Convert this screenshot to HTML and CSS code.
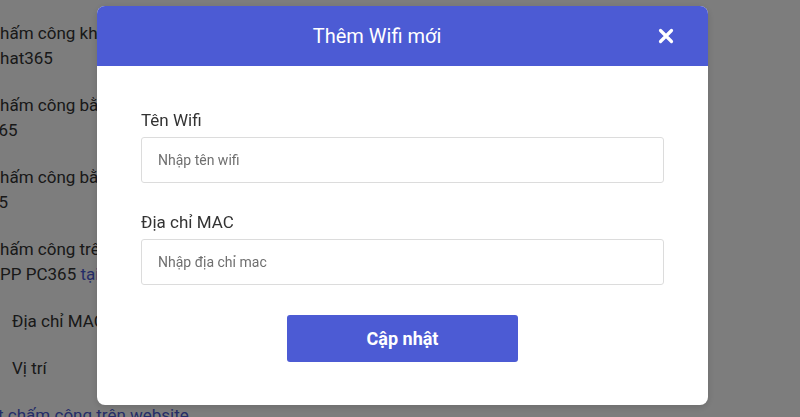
FILE: index.html
```html
<!DOCTYPE html>
<html lang="vi">
<head>
<meta charset="utf-8">
<title>Thêm Wifi mới</title>
<link rel="stylesheet" href="styles.css">
</head>
<body>
<div class="page">
  <p class="item">Chấm công khuôn mặt trên app<br>Chat365</p>
  <p class="item">Chấm công bằng mã QR trên app<br>365</p>
  <p class="item">Chấm công bằng khuôn mặt trên<br>65</p>
  <p class="item">Chấm công trên website hoặc<br>APP PC365 <a class="link" href="#">tại đây</a></p>
  <p class="row">Địa chỉ MAC</p>
  <p class="row">Vị trí</p>
  <p class="item shifted"><a class="link under" href="#">Cài đặt chấm công trên website</a></p>
</div>

<div class="overlay">
  <div class="modal">
    <div class="modal-header">
      <h2 class="modal-title">Thêm Wifi mới</h2>
      <button class="close" type="button" aria-label="Đóng">
        <svg viewBox="0 0 16 16" width="16" height="16"><path d="M2.5 2.5 L13.5 13.5 M13.5 2.5 L2.5 13.5" stroke="#fff" stroke-width="3.2" stroke-linecap="round" fill="none"/></svg>
      </button>
    </div>
    <form class="modal-body">
      <label class="label" for="wifi">Tên Wifi</label>
      <input class="input" id="wifi" type="text" placeholder="Nhập tên wifi">
      <label class="label second" for="mac">Địa chỉ MAC</label>
      <input class="input" id="mac" type="text" placeholder="Nhập địa chỉ mac">
      <button class="submit" type="button">Cập nhật</button>
    </form>
  </div>
</div>
</body>
</html>
```

FILE: styles.css
```css
* { box-sizing: border-box; }

html, body {
  margin: 0;
  padding: 0;
  background: #fff;
  font-family: Roboto, "Noto Sans", Arial, sans-serif;
  overflow: hidden;
  height: 417px;
}

.page {
  display: flex;
  flex-direction: column;
  gap: 22px;
  padding-top: 21px;
  margin-left: -11px;
  color: #333;
  font-size: 17px;
  line-height: 25px;
}

.page p { margin: 0; white-space: nowrap; }

.page .row { padding-left: 23px; }

.page .shifted { margin-left: -39px; }

.link { color: #4c5bd4; text-decoration: none; }
.link.under { text-decoration: underline; }

.overlay {
  position: fixed;
  inset: 0;
  background: rgba(0, 0, 0, 0.51);
  padding: 6px 0 0 97px;
}

.modal {
  width: 611px;
  height: 399px;
  background: #fff;
  border-radius: 8px;
  overflow: hidden;
  box-shadow: 0 2px 8px rgba(0, 0, 0, 0.15);
}

.modal-header {
  height: 60px;
  background: #4c5bd4;
  display: flex;
  align-items: center;
}

.modal-title {
  flex: 1;
  margin: 0;
  text-align: center;
  color: #fff;
  font-size: 20px;
  font-weight: 400;
  line-height: 24px;
}

.close {
  width: 16px;
  height: 16px;
  padding: 0;
  margin: 0 34px 0 1px;
  border: 0;
  background: none;
  display: flex;
}

.modal-body {
  display: flex;
  flex-direction: column;
  padding: 44px 44px 0;
}

.label {
  font-size: 17px;
  line-height: 20px;
  color: #333;
  margin-bottom: 7px;
}

.label.second { margin-top: 29px; }

.input {
  height: 46px;
  border: 1px solid #dcdcdc;
  border-radius: 3px;
  padding: 0 16px;
  font-family: inherit;
  font-size: 14px;
  color: #333;
}

.input::placeholder { color: #6f6f6f; }

.submit {
  align-self: center;
  width: 231px;
  height: 47px;
  margin-top: 30px;
  border: 0;
  border-radius: 3px;
  background: #4c5bd4;
  color: #fff;
  font-family: inherit;
  font-size: 18px;
  font-weight: 700;
}
```
